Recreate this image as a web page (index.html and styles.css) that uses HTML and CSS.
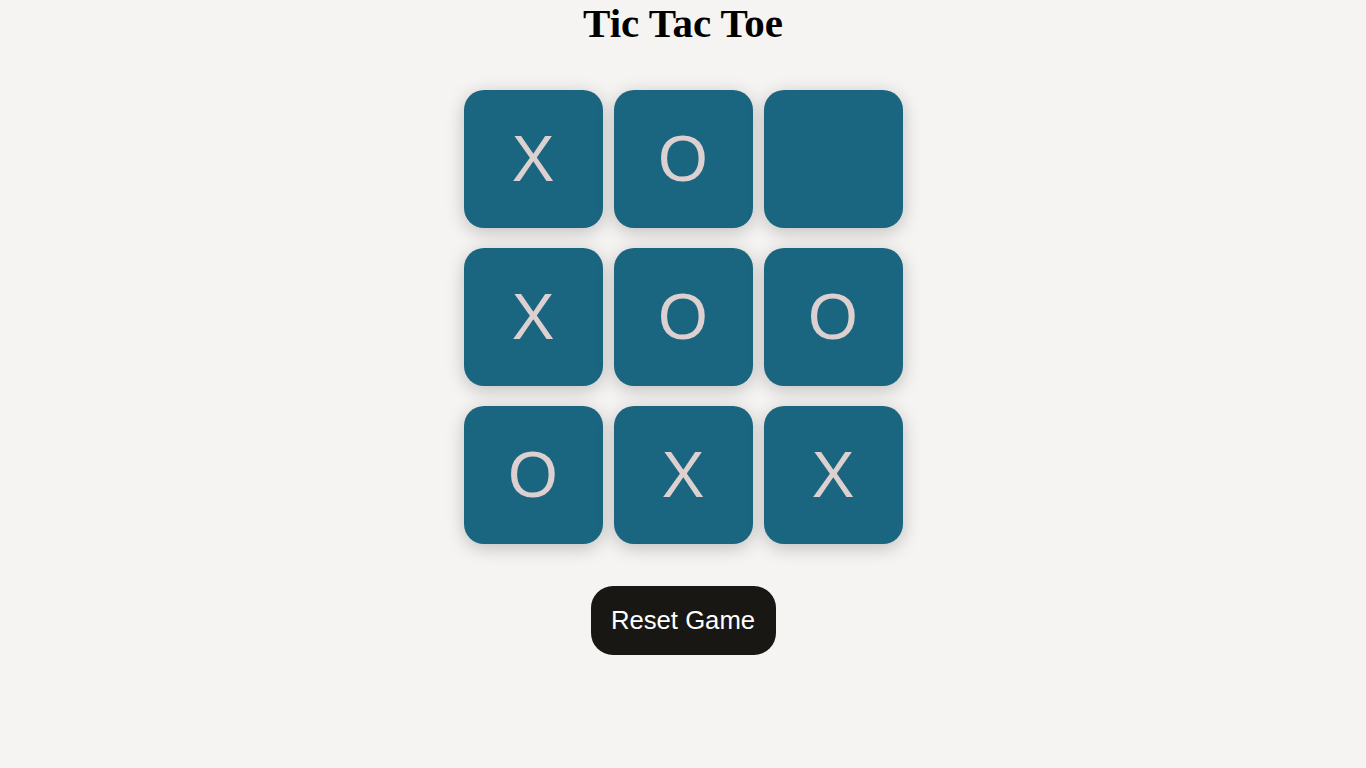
FILE: index.html
```html
<!DOCTYPE html>
<html lang="en">
<head>
<meta charset="utf-8">
<title>Tic Tac Toe</title>
<link rel="stylesheet" href="styles.css">
</head>
<body>
<main class="game">
  <h1 class="title">Tic Tac Toe</h1>
  <div class="board">
    <div class="cell">X</div>
    <div class="cell">O</div>
    <div class="cell"></div>
    <div class="cell">X</div>
    <div class="cell">O</div>
    <div class="cell">O</div>
    <div class="cell">O</div>
    <div class="cell">X</div>
    <div class="cell">X</div>
  </div>
  <button class="reset" type="button">Reset Game</button>
</main>
</body>
</html>
```

FILE: styles.css
```css
html, body {
  margin: 0;
  padding: 0;
  background: #f5f4f2;
}

.game {
  display: flex;
  flex-direction: column;
  align-items: center;
}

.title {
  margin: 0;
  font-family: "Liberation Serif", "Times New Roman", serif;
  font-weight: bold;
  font-size: 41px;
  line-height: 46px;
  color: #000;
}

.board {
  margin-top: 44px;
  display: grid;
  grid-template-columns: repeat(3, 139px);
  grid-auto-rows: 138px;
  column-gap: 11px;
  row-gap: 20px;
}

.cell {
  background: #1a6680;
  border-radius: 20px;
  box-shadow: 0 4px 18px rgba(0, 0, 0, 0.22);
  display: flex;
  align-items: center;
  justify-content: center;
  font-family: "Liberation Sans", Arial, sans-serif;
  font-size: 64px;
  color: #ddd0d0;
}

.reset {
  margin-top: 42px;
  background: #181713;
  color: #fff;
  border: none;
  border-radius: 22px;
  width: 185px;
  height: 69px;
  padding: 0;
  font-family: "Liberation Sans", Arial, sans-serif;
  font-size: 25.7px;
}
```
